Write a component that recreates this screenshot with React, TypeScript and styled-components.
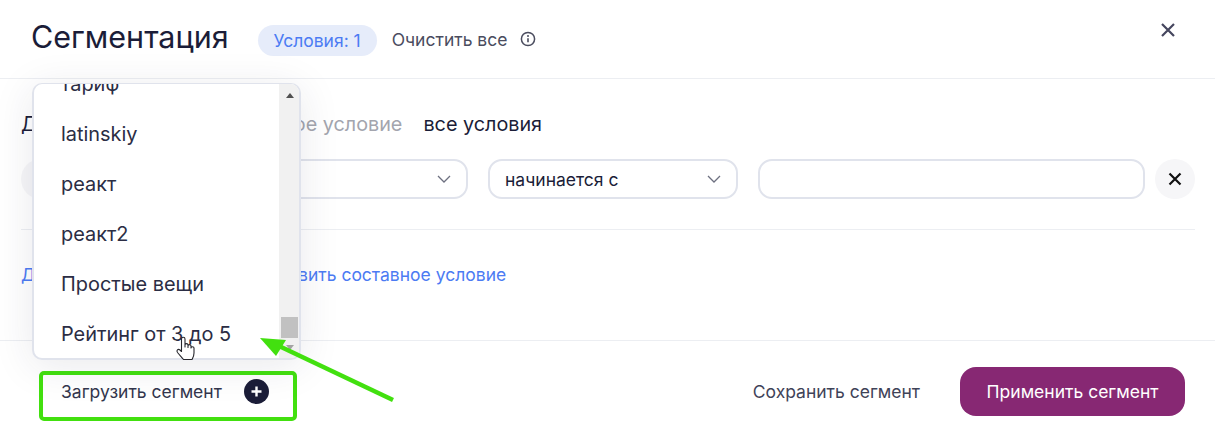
import React from 'react';
import styled, { createGlobalStyle } from 'styled-components';

const GlobalStyle = createGlobalStyle`
  html, body {
    margin: 0;
    background: #fff;
    font-family: Inter, "Noto Sans", sans-serif;
    color: #1b1d38;
  }
  * { box-sizing: border-box; }
`;

const Page = styled.div`
  position: relative;
  width: 1215px;
  height: 439px;
  overflow: hidden;
  display: flex;
  flex-direction: column;
`;

const Header = styled.header`
  height: 79px;
  flex: none;
  display: flex;
  align-items: center;
  padding: 0 38px 0 31px;
  border-bottom: 1px solid #eceef2;
`;

const Title = styled.h1`
  margin: 0 29px 5px 0;
  font-size: 30.5px;
  font-weight: 400;
  line-height: 36px;
`;

const Pill = styled.span`
  height: 31px;
  width: 119px;
  margin-top: 2px;
  display: flex;
  align-items: center;
  justify-content: center;
  border-radius: 16px;
  background: #e6ecfa;
  color: #4c7bf3;
  font-size: 17.5px;
`;

const ClearText = styled.span`
  margin-left: 15px;
  font-size: 17.5px;
  color: #4a4c5e;
`;

const InfoIcon = styled.svg`
  margin-left: 13px;
  width: 16px;
  height: 16px;
`;

const CloseButton = styled.svg`
  margin: 0 0 18px auto;
  width: 18px;
  height: 18px;
`;

const Body = styled.main`
  flex: 1;
  padding: 33px 20px 0 21px;
`;

const MatchRow = styled.div`
  display: flex;
  align-items: center;
  height: 24px;
  font-size: 19.8px;
`;

const MatchLabel = styled.span`
  flex: 0 0 233px;
  white-space: nowrap;
  overflow: hidden;
`;

const MatchOption = styled.span<{ $active?: boolean }>`
  margin-right: 21px;
  color: ${p => (p.$active ? '#1b1d38' : '#a3a5ae')};
`;

const ConditionRow = styled.div`
  margin-top: 23px;
  display: flex;
  align-items: center;
  padding-bottom: 30px;
  border-bottom: 1px solid #eceef2;
`;

const RoundButton = styled.div`
  flex: none;
  width: 40px;
  height: 40px;
  border-radius: 50%;
  background: #f6f6f8;
  display: flex;
  align-items: center;
  justify-content: center;
`;

const Select = styled.div<{ $width: number }>`
  flex: none;
  width: ${p => p.$width}px;
  height: 40px;
  margin-left: ${p => (p.$width > 300 ? 10 : 20)}px;
  padding: 0 15px;
  display: flex;
  align-items: center;
  justify-content: space-between;
  border: 2px solid #e0e3ec;
  border-radius: 14px;
  font-size: 17.5px;
`;

const TextField = styled.div`
  flex: none;
  width: 387px;
  height: 40px;
  margin: 0 10px 0 20px;
  border: 2px solid #e0e3ec;
  border-radius: 14px;
`;

const LinkRow = styled.div`
  margin-top: 35px;
  display: flex;
  font-size: 17.5px;
  line-height: 20px;
  color: #4c7bf3;
`;

const LinkLabel = styled.span`
  flex: 0 0 232px;
  white-space: nowrap;
  overflow: hidden;
`;

const Footer = styled.footer`
  height: 99px;
  flex: none;
  display: flex;
  align-items: center;
  padding: 0 30px 0 39px;
  border-top: 1px solid #eceef2;
`;

const LoadButton = styled.div`
  width: 258px;
  height: 50px;
  margin-top: 12px;
  padding: 0 24px 9px 18px;
  display: flex;
  align-items: center;
  justify-content: space-between;
  border: 4px solid #42e00f;
  border-radius: 5px;
  font-size: 17.5px;
  color: #33364d;
`;

const PlusBadge = styled.svg`
  width: 25px;
  height: 25px;
`;

const SaveText = styled.span`
  margin-left: auto;
  margin-top: 3px;
  font-size: 17.5px;
  color: #3f4358;
`;

const ApplyButton = styled.div`
  margin: 3px 0 0 40px;
  width: 225px;
  height: 49px;
  display: flex;
  align-items: center;
  justify-content: center;
  border-radius: 16px;
  background: #872873;
  color: #fff;
  font-size: 17.5px;
`;

const Dropdown = styled.div`
  position: absolute;
  left: 32px;
  top: 83px;
  width: 269px;
  height: 277px;
  display: flex;
  overflow: hidden;
  background: #fff;
  border: 2px solid #e0e3ec;
  border-top-width: 1px;
  border-radius: 10px;
  box-shadow: 0 6px 40px rgba(40, 44, 70, 0.1);
`;

const OptionList = styled.ul`
  flex: 1;
  list-style: none;
  margin: -25px 0 0;
  padding: 0 0 0 27px;
`;

const OptionItem = styled.li`
  height: 50px;
  display: flex;
  align-items: center;
  font-size: 19.9px;
  color: #2b2d44;
`;

const Scrollbar = styled.div`
  position: relative;
  flex: none;
  width: 20px;
  background: #f1f1f1;
`;

const ScrollArrow = styled.span<{ $down?: boolean }>`
  position: absolute;
  left: 7px;
  ${p => (p.$down ? 'bottom: 8px;' : 'top: 9px;')}
  width: 0;
  height: 0;
  border-left: 4px solid transparent;
  border-right: 4px solid transparent;
  ${p => (p.$down ? 'border-top: 5px solid #a3a3a3;' : 'border-bottom: 5px solid #505050;')}
`;

const ScrollThumb = styled.span`
  position: absolute;
  left: 2px;
  top: 233px;
  width: 17px;
  height: 21px;
  background: #c1c1c1;
`;

const Annotation = styled.svg`
  position: absolute;
  left: 250px;
  top: 325px;
  width: 150px;
  height: 85px;
`;

const HandCursor = styled.svg`
  position: absolute;
  left: 175px;
  top: 335px;
  width: 22px;
  height: 27px;
`;

const Chevron = () => (
  <svg width="14" height="14" viewBox="0 0 14 14" fill="none">
    <path d="M1 4l6 6 6-6" stroke="#6d7080" strokeWidth="1.3" />
  </svg>
);

const options = ['тариф', 'latinskiy', 'реакт', 'реакт2', 'Простые вещи', 'Рейтинг от 3 до 5'];

export default function App() {
  return (
    <Page>
      <GlobalStyle />
      <Header>
        <Title>Сегментация</Title>
        <Pill>Условия: 1</Pill>
        <ClearText>Очистить все</ClearText>
        <InfoIcon viewBox="0 0 16 16" fill="none">
          <circle cx="8" cy="8" r="6.6" stroke="#4a4c5e" strokeWidth="1.5" />
          <path d="M8 7.3v4" stroke="#4a4c5e" strokeWidth="1.6" />
          <circle cx="8" cy="5" r="1" fill="#4a4c5e" />
        </InfoIcon>
        <CloseButton viewBox="0 0 18 18" fill="none">
          <path d="M3 3l12 12M15 3L3 15" stroke="#45465e" strokeWidth="2.2" />
        </CloseButton>
      </Header>

      <Body>
        <MatchRow>
          <MatchLabel>Должно выполняться</MatchLabel>
          <MatchOption>любое условие</MatchOption>
          <MatchOption $active>все условия</MatchOption>
        </MatchRow>
        <ConditionRow>
          <RoundButton />
          <Select $width={397}>
            <span />
            <Chevron />
          </Select>
          <Select $width={250}>
            <span>начинается с</span>
            <Chevron />
          </Select>
          <TextField />
          <RoundButton>
            <svg width="14" height="14" viewBox="0 0 14 14" fill="none">
              <path d="M1.5 1.5l11 11M12.5 1.5l-11 11" stroke="#111" strokeWidth="2.2" />
            </svg>
          </RoundButton>
        </ConditionRow>
        <LinkRow>
          <LinkLabel>Добавить условие</LinkLabel>
          <span>Добавить составное условие</span>
        </LinkRow>
      </Body>

      <Footer>
        <LoadButton>
          <span>Загрузить сегмент</span>
          <PlusBadge viewBox="0 0 25 25" fill="none">
            <circle cx="12.5" cy="12.5" r="12.5" fill="#1b1d38" />
            <path d="M12.5 7.5v10M7.5 12.5h10" stroke="#fff" strokeWidth="2.4" />
          </PlusBadge>
        </LoadButton>
        <SaveText>Сохранить сегмент</SaveText>
        <ApplyButton>Применить сегмент</ApplyButton>
      </Footer>

      <Dropdown>
        <OptionList>
          {options.map(o => (
            <OptionItem key={o}>{o}</OptionItem>
          ))}
        </OptionList>
        <Scrollbar>
          <ScrollArrow />
          <ScrollThumb />
          <ScrollArrow $down />
        </Scrollbar>
      </Dropdown>

      <Annotation viewBox="0 0 150 85" fill="none">
        <path d="M143 75L29 21" stroke="#42e00f" strokeWidth="4.5" />
        <path d="M10 13L36 15L26 31Z" fill="#42e00f" />
      </Annotation>

      <HandCursor viewBox="0 0 22 27" fill="none">
        <path
          d="M6.5 14V4c0-2.400 3.500-2.400 3.500 0v8V10c0-1.800 3-1.800 3 0v2.500V11c0-1.800 3-1.800 3 0v2c0-1.600 3-1.600 3 0v5c0 3-1 4.500-2 6.500H8.500c-1.500-2-3-3.500-6-7-1.500-2 .5-4 2.500-2.500l1.500 1.500z"
          fill="#fff"
          stroke="#26262c"
          strokeWidth="1.1"
          strokeLinejoin="round"
        />
      </HandCursor>
    </Page>
  );
}
